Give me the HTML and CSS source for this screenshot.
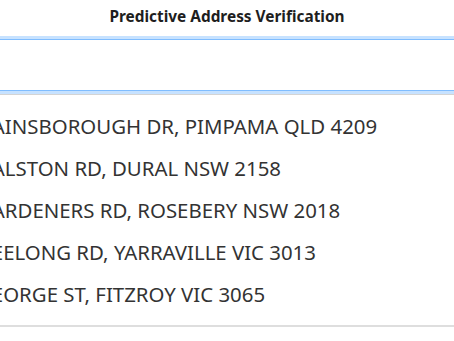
FILE: index.html
```html
<!DOCTYPE html>
<html>
<head>
<meta charset="utf-8">
<link rel="stylesheet" href="styles.css">
</head>
<body>
<div class="page">
  <h1 class="title">Predictive Address Verification</h1>
  <div class="search">
    <input class="search-input" type="text" aria-label="Address">
    <ul class="results">
      <li class="result">GAINSBOROUGH DR, PIMPAMA QLD 4209</li>
      <li class="result">GALSTON RD, DURAL NSW 2158</li>
      <li class="result">GARDENERS RD, ROSEBERY NSW 2018</li>
      <li class="result">GEELONG RD, YARRAVILLE VIC 3013</li>
      <li class="result">GEORGE ST, FITZROY VIC 3065</li>
    </ul>
  </div>
</div>
</body>
</html>
```
FILE: styles.css
```css
html, body {
  margin: 0;
  padding: 0;
  background: #fff;
  overflow: hidden;
}
.page {
  width: 454px;
  height: 341px;
  overflow: hidden;
  font-family: "Noto Sans", "Open Sans", sans-serif;
}
.title {
  margin: 0;
  height: 36px;
  padding-top: 7px;
  box-sizing: border-box;
  text-align: center;
  font-size: 15.4px;
  font-weight: 700;
  color: #1e1e1e;
  line-height: 20px;
}
.search {
  margin: 0 -30px 0 -25px;
  padding-top: 3px;
}
.search-input {
  display: block;
  width: 100%;
  height: 52px;
  box-sizing: border-box;
  border: 1px solid #80bdff;
  box-shadow: 0 0 0 3px rgba(0, 123, 255, 0.22);
  outline: none;
  padding: 0 16px;
  font: inherit;
  background: #fff;
}
.results {
  list-style: none;
  margin: 3px 0 0 0;
  padding: 10px 0;
  border-bottom: 2px solid #dedede;
  border-top: 1px solid #d4d4d4;
}
.result {
  height: 42px;
  line-height: 42px;
  padding-left: 2px;
  font-size: 20.4px;
  color: #333;
  white-space: nowrap;
}
```
